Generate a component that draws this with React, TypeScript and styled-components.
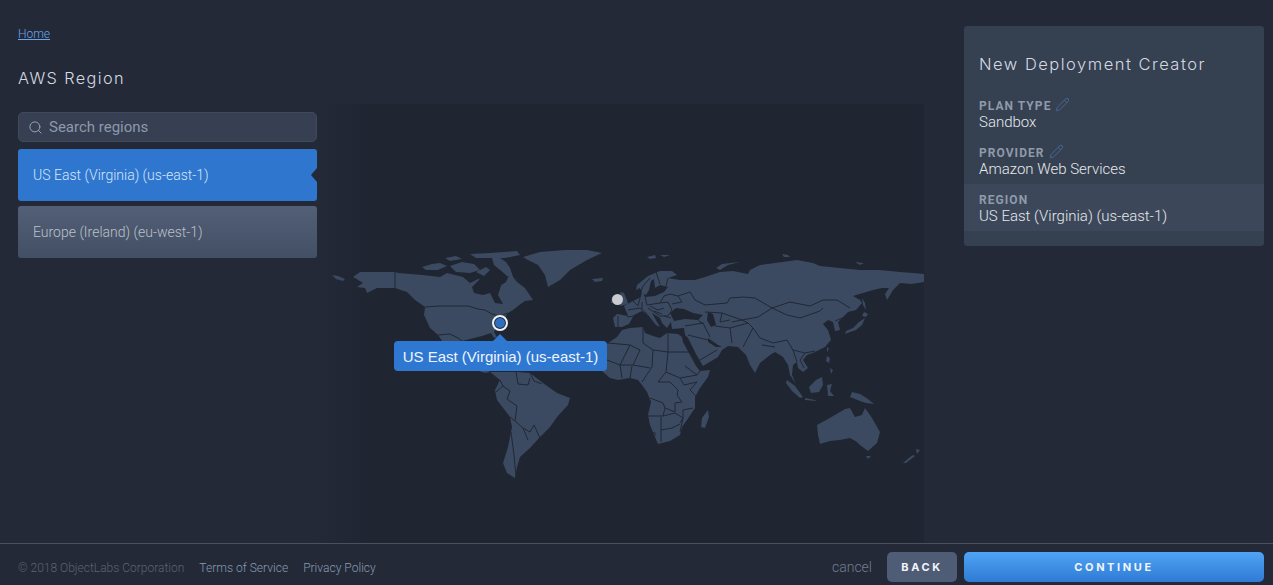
import React from 'react';
import styled, { createGlobalStyle } from 'styled-components';
import { Search, Pencil } from 'lucide-react';

const GlobalStyle = createGlobalStyle`
  html, body {
    margin: 0;
    height: 100%;
    background: #232937;
    font-family: "Roboto", "Liberation Sans", sans-serif;
    font-weight: 300;
    overflow: hidden;
  }
`;

const Page = styled.div`
  display: flex;
  flex-direction: column;
  height: 585px;
  width: 1273px;
`;

const Body = styled.div`
  display: flex;
  height: 543px;
  padding-left: 18px;
  box-sizing: border-box;
`;

const LeftColumn = styled.div`
  width: 299px;
  flex: none;
  padding-top: 27px;
`;

const HomeLink = styled.a`
  display: block;
  font-size: 12px;
  line-height: 15px;
  color: #6aa5ea;
  text-decoration: underline;
`;

const PageTitle = styled.h1`
  margin: 21px 0 0;
  font-family: "Inter", sans-serif;
  font-weight: 300;
  font-size: 16.3px;
  line-height: 30px;
  letter-spacing: 1.4px;
  color: #d5dae2;
`;

const SearchBox = styled.div`
  display: flex;
  align-items: center;
  gap: 6px;
  height: 30px;
  margin-top: 19px;
  padding-left: 9px;
  box-sizing: border-box;
  background: #364052;
  border: 1px solid #3f4a5d;
  border-radius: 5px;
  font-size: 15px;
  font-weight: 400;
  color: #8e99ab;
  svg { color: #98a2b2; flex: none; }
`;

const RegionList = styled.div`
  display: flex;
  flex-direction: column;
  gap: 5px;
  margin-top: 7px;
`;

const RegionItem = styled.div<{ $selected?: boolean }>`
  position: relative;
  height: 52px;
  display: flex;
  align-items: center;
  padding-left: 15px;
  border-radius: 3px;
  font-size: 14px;
  color: ${p => (p.$selected ? '#d8e6f8' : '#bcc1ca')};
  background: ${p => (p.$selected ? '#2f76cf' : 'linear-gradient(#535f76, #434f65)')};
  &::after {
    content: '';
    display: ${p => (p.$selected ? 'block' : 'none')};
    position: absolute;
    right: 0;
    top: 19px;
    border: 7px solid transparent;
    border-right-color: #232937;
    border-left-width: 0;
    border-right-width: 6px;
  }
`;

const MapStage = styled.div`
  position: relative;
  width: 607px;
  height: 439px;
  margin-top: 104px;
  flex: none;
  background: linear-gradient(90deg, #232937 0, #1f2531 50px);
  overflow: hidden;
  svg { display: block; }
`;

const Pin = styled.div<{ $active?: boolean }>`
  position: absolute;
  border-radius: 50%;
  box-sizing: border-box;
  ${p =>
    p.$active
      ? `left: 175px; top: 211px; width: 16px; height: 16px; background: #2f6fbd; border: 2px solid #eef1f5; box-shadow: inset 0 0 0 1px #1f2531;`
      : `left: 295px; top: 190px; width: 11px; height: 11px; background: #c9cbd0;`}
`;

const MapTip = styled.div`
  position: absolute;
  left: 77px;
  top: 237px;
  width: 213px;
  height: 30px;
  padding-top: 1px;
  box-sizing: border-box;
  border-radius: 4px;
  background: #2f78d2;
  color: #eef4fc;
  font-family: "Liberation Sans", sans-serif;
  font-weight: 400;
  font-size: 15px;
  line-height: 30px;
  text-align: center;
  &::before {
    content: '';
    position: absolute;
    left: 99px;
    top: -7px;
    border-left: 7px solid transparent;
    border-right: 7px solid transparent;
    border-bottom: 7px solid #2f78d2;
  }
`;

const SummaryCard = styled.aside`
  width: 300px;
  height: 220px;
  margin: 26px 0 0 40px;
  flex: none;
  background: #354050;
  border-radius: 3px;
`;

const CardTitle = styled.h2`
  margin: 0;
  height: 64px;
  padding: 24px 15px 0;
  box-sizing: border-box;
  font-family: "Inter", sans-serif;
  font-weight: 300;
  font-size: 16.5px;
  line-height: 28px;
  letter-spacing: 1.5px;
  white-space: nowrap;
  color: #d5dae2;
`;

const SummaryRow = styled.div<{ $current?: boolean }>`
  height: 47px;
  padding: 9px 15px 0;
  box-sizing: border-box;
  background: ${p => (p.$current ? '#3c485a' : 'transparent')};
`;

const RowLabel = styled.div`
  display: flex;
  align-items: center;
  gap: 4px;
  font-size: 12px;
  line-height: 15px;
  font-weight: 700;
  letter-spacing: 1.05px;
  color: #8f9aab;
  svg { color: #4a6c9e; margin-top: -4px; }
`;

const RowValue = styled.div`
  font-size: 15px;
  line-height: 17px;
  font-weight: 300;
  color: #e6e9ee;
`;

const Footer = styled.footer`
  display: flex;
  align-items: center;
  height: 42px;
  padding: 5px 9px 0 18px;
  box-sizing: border-box;
  border-top: 1px solid #4a505f;
  font-size: 12px;
`;

const Copyright = styled.span`
  color: #5b6372;
  margin: 1px 15px 0 0;
`;

const FooterLink = styled.a`
  color: #8a9ab2;
  margin: 1px 15px 0 0;
  font-size: 12.05px;
`;

const Cancel = styled.span`
  margin-left: auto;
  margin-right: 15px;
  font-size: 14px;
  color: #737d8d;
`;

const Button = styled.button<{ $primary?: boolean }>`
  height: 30px;
  width: ${p => (p.$primary ? '300px' : '70px')};
  margin-left: ${p => (p.$primary ? '7px' : '0')};
  padding: 0;
  border: 0;
  border-radius: 5px;
  font-family: "Inter", sans-serif;
  font-weight: 700;
  font-size: 11px;
  letter-spacing: 2.6px;
  color: #f2f5f9;
  background: ${p => (p.$primary ? 'linear-gradient(#4fa4f5, #2f7ad5)' : '#4f5c75')};
`;

// land shapes, in page pixels (the viewBox below starts where the stage does)
const land = [
  // north america
  '353,277 360,272 395,272 398,273 423,275 440,277 447,273 463,277 470,283 478,279 493,280 500,286 506,282 510,273 517,282 525,288 533,300 525,301 518,306 513,310 508,313 503,320 497,327 494,332 497,337 494,338 491,333 482,336 470,339 462,341 462,355 475,362 490,372 485,373 470,368 455,358 445,345 438,335 430,328 424,315 425,307 415,300 407,292 395,288 377,288 367,293 365,288 357,287 363,283 355,278',
  // aleutians
  '332,275 338,276 345,279 343,281 336,279',
  // arctic islands
  '422,267 432,264 440,263 447,266 438,270 426,270',
  '450,266 462,262 474,264 480,270 470,273 456,272',
  '476,272 486,267 490,270 484,276',
  '492,258 500,258 506,262 510,268 513,277 507,276 500,270 494,265',
  '470,254 490,253 517,251 520,255 505,258 488,258 476,258',
  '445,258 456,256 462,259 450,261',
  // greenland
  '523,257 540,252 565,250 587,250 602,253 587,260 570,270 560,280 548,287 545,275 538,265 528,260',
  // iceland
  '592,279 603,278 602,281 595,282',
  // south america
  '490,372 500,372 517,372 530,373 543,383 557,393 570,398 568,405 557,417 550,427 540,437 530,448 520,457 517,467 515,478 507,473 503,463 508,447 512,427 510,417 497,400 495,390 500,380',
  // eurasia
  '613,318 617,314 628,316 624,306 633,301 641,297 642,291 645,297 655,296 664,292 668,287 660,285 655,288 654,279 651,281 649,290 646,295 642,293 640,288 636,290 637,285 648,276 660,271 672,271 677,275 668,278 680,280 695,280 705,277 720,272 733,271 748,274 750,270 760,265 775,263 797,260 813,263 820,266 840,268 860,270 880,270 900,272 913,273 924,274 924,282 912,284 900,283 893,290 887,300 885,294 889,288 882,288 873,290 863,293 853,296 860,300 862,303 856,310 848,312 842,318 838,322 840,330 835,331 833,322 828,320 823,324 828,330 831,340 825,347 815,352 807,355 803,360 808,368 803,372 798,368 797,362 793,365 792,375 796,384 790,375 788,365 783,357 775,352 770,355 760,363 755,373 750,365 746,355 738,347 728,346 722,350 718,357 703,366 696,354 688,338 685,335 684,328 672,329 671,322 667,328 662,323 660,318 652,313 657,322 660,327 656,325 648,315 642,311 634,315 629,324 622,327 615,327',
  // africa
  '600,350 608,343 617,337 622,330 630,328 643,327 645,333 653,336 660,338 667,333 678,334 682,337 683,342 690,355 696,366 700,371 710,370 708,377 700,388 695,397 695,408 687,420 682,427 680,435 670,441 658,444 655,437 650,425 648,415 651,402 647,392 642,385 638,380 630,378 618,380 610,378 603,372 595,362',
  // madagascar
  '708,410 709,417 705,428 701,427 702,418',
  // britain, ireland
  '620,292 624,293 627,300 628,304 620,306 622,300',
  '612,297 617,296 617,303 611,303',
  // svalbard, novaya zemlya, siberian islands
  '647,257 655,255 656,258 650,259',
  '660,255 670,255 664,257',
  '716,268 722,264 740,262 728,265 720,270',
  '782,254 788,255 790,257 784,257',
  '855,262 864,263 860,265',
  // sakhalin, japan
  '862,298 865,303 866,310 863,305',
  '864,312 868,314 866,317 862,316',
  '865,318 862,325 856,330 850,332 845,334 846,331 853,328 859,322',
  // taiwan, philippines
  '827,347 829,349 827,352',
  '827,356 830,358 829,363 826,361',
  '830,368 833,370 831,374',
  // sumatra, java, borneo, sulawesi, new guinea
  '787,380 795,386 803,397 800,398 792,391 786,383',
  '805,398 815,400 816,401 805,400',
  '809,387 816,380 822,377 823,385 819,392 811,393',
  '827,385 832,384 830,391 834,396 828,396',
  '852,392 860,394 868,399 874,404 866,403 860,401 850,397',
  // australia, tasmania, new zealand
  '817,425 828,419 840,412 845,409 850,408 855,417 862,415 865,408 872,418 880,432 877,443 868,451 860,445 857,442 850,438 840,440 830,441 820,444 818,435',
  '866,456 871,456 868,459',
  '903,463 910,457 913,455 915,456 906,463',
  '916,449 920,450 917,454',
];

// seas that sit inside the land shapes
const water = [
  '472,287 480,279 493,279 501,286 498,295 503,304 495,303 490,293 483,295 474,293',
  '670,313 676,308 684,309 693,313 703,315 698,320 685,319 674,321',
  '708,312 713,314 716,325 711,327 707,320',
  '708,338 718,345 722,347 716,347 708,342',
  '497,283 505,275 500,270 494,276',
];

const borders = [
  // alaska, canada / usa
  'M395,272 L395,288',
  'M425,307 L440,306 L468,306 L478,309 L485,310 L492,314 L500,316 L508,313',
  'M438,335 L450,334 L458,338 L462,341',
  // south america
  'M496,392 L503,386 L510,391 L507,399 L517,406 L515,421 L523,428 L528,440',
  'M510,417 L515,421',
  'M516,372 L518,384 L528,385 L530,378',
  'M503,386 L500,380',
  'M523,428 L530,432 L534,425 L540,438',
  'M511,432 L514,455 L516,476',
  'M530,373 L534,381 L542,384',
  // europe
  'M627,317 L634,316 M628,310 L640,308 L647,314 M633,301 L638,306 L640,298',
  'M645,297 L647,305 L660,303 L668,302 L672,310 L668,316 L660,316 L648,308',
  'M660,303 L664,296 L670,294 L678,296 L682,302 L672,304',
  'M650,278 L643,286 L641,292 M656,272 L660,284 M668,278 L666,286',
  'M678,296 L690,292 L695,300 L705,305',
  'M650,306 L658,310 L664,308 M654,311 L662,314 M664,316 L671,318 M618,316 L618,327 M642,302 L642,310',
  // russia south edge, mongolia, kazakhstan
  'M705,305 L727,303 L730,298 L743,297 L755,298 L772,308 L790,302 L810,306 L823,300 L837,300 L850,308',
  'M772,308 L787,315 L800,318 L820,311 L823,308',
  'M705,312 L722,313 L742,320 L758,317 L772,308',
  'M693,313 L700,322 L703,323 L710,337',
  'M730,328 L748,323 L753,328 L760,338 L773,343 L787,340 L793,350 L805,353 L815,351',
  'M742,320 L748,323 M753,328 L743,347 M730,328 L732,343 M715,326 L730,328',
  'M685,326 L703,323 M688,335 L708,340 M700,360 L717,350 M762,345 L775,347',
  'M793,350 L797,362 M805,353 L800,360 L804,368',
  'M722,313 L720,322 L730,320 M732,322 L742,320 M835,321 L842,318',
  // africa
  'M643,327 L643,343 L653,350 L668,352 L668,333 M668,352 L690,352',
  'M668,352 L666,372 L680,378 L697,375 L700,371 M685,366 L697,375',
  'M653,350 L652,367 L642,382 M620,365 L633,365 L650,368 M630,345 L620,365 L622,378 M608,343 L630,345 L640,350 L633,365',
  'M607,360 L620,365 M632,366 L630,378',
  'M658,382 L670,382 L678,390 L677,395 L682,402 L675,403 L675,412 L665,408 L663,403 L650,398',
  'M666,372 L658,382 M680,378 L684,385 L697,382 L690,390 L697,397',
  'M648,416 L663,416 L665,408 M663,416 L675,413 L683,418 L680,423 M661,417 L661,430 L672,428 L680,424',
  'M683,410 L693,408 M683,410 L683,418 L680,432 M661,430 L661,442',
];

function WorldMap() {
  return (
    <svg width={607} height={439} viewBox="317 104 607 439">
      {land.map((pts, i) => (
        <polygon key={i} points={pts} fill="#3b4a60" />
      ))}
      {water.map((pts, i) => (
        <polygon key={i} points={pts} fill="#1f2531" />
      ))}
      <path d={borders.join(' ')} fill="none" stroke="#212735" strokeWidth={1} />
      <circle cx={654} cy={434} r={1.5} fill="none" stroke="#212735" strokeWidth={0.8} />
    </svg>
  );
}

export default function App() {
  return (
    <Page>
      <GlobalStyle />
      <Body>
        <LeftColumn>
          <HomeLink>Home</HomeLink>
          <PageTitle>AWS Region</PageTitle>
          <SearchBox>
            <Search size={15} strokeWidth={1.6} />
            Search regions
          </SearchBox>
          <RegionList>
            <RegionItem $selected>US East (Virginia) (us-east-1)</RegionItem>
            <RegionItem>Europe (Ireland) (eu-west-1)</RegionItem>
          </RegionList>
        </LeftColumn>
        <MapStage>
          <WorldMap />
          <Pin />
          <Pin $active />
          <MapTip>US East (Virginia) (us-east-1)</MapTip>
        </MapStage>
        <SummaryCard>
          <CardTitle>New Deployment Creator</CardTitle>
          <SummaryRow>
            <RowLabel>PLAN TYPE <Pencil size={15} strokeWidth={1.4} /></RowLabel>
            <RowValue>Sandbox</RowValue>
          </SummaryRow>
          <SummaryRow>
            <RowLabel>PROVIDER <Pencil size={15} strokeWidth={1.4} /></RowLabel>
            <RowValue>Amazon Web Services</RowValue>
          </SummaryRow>
          <SummaryRow $current>
            <RowLabel>REGION</RowLabel>
            <RowValue>US East (Virginia) (us-east-1)</RowValue>
          </SummaryRow>
        </SummaryCard>
      </Body>
      <Footer>
        <Copyright>© 2018 ObjectLabs Corporation</Copyright>
        <FooterLink>Terms of Service</FooterLink>
        <FooterLink>Privacy Policy</FooterLink>
        <Cancel>cancel</Cancel>
        <Button>BACK</Button>
        <Button $primary>CONTINUE</Button>
      </Footer>
    </Page>
  );
}
